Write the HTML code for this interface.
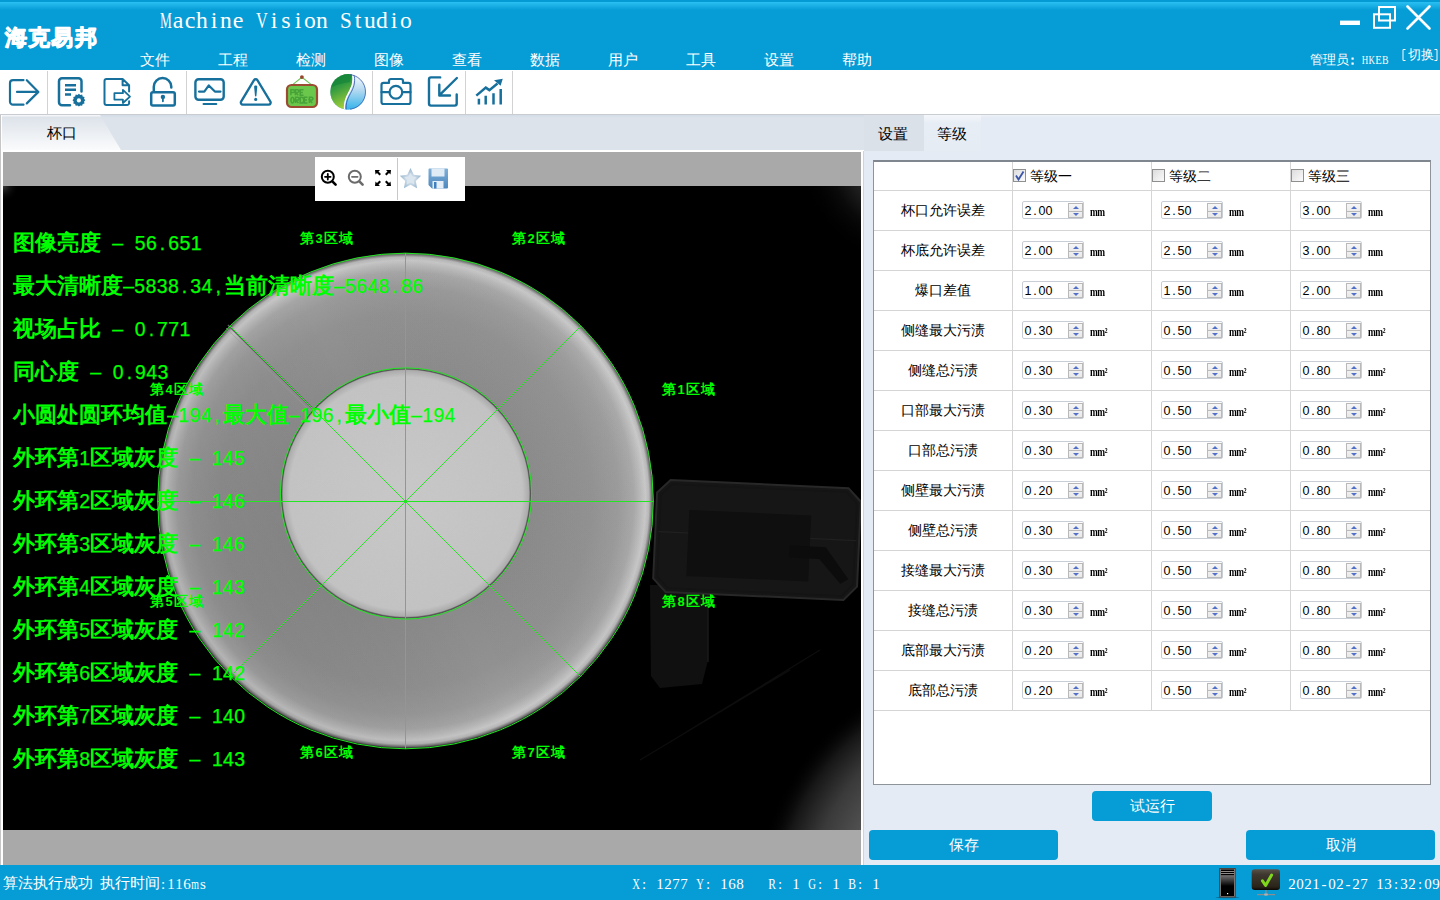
<!DOCTYPE html>
<html><head><meta charset="utf-8">
<style>
*{margin:0;padding:0;box-sizing:border-box}
html,body{width:1440px;height:900px;overflow:hidden;background:#e4ebf4;font-family:"Liberation Sans",sans-serif}
.a{position:absolute}
#title{left:0;top:0;width:1440px;height:70px;background:linear-gradient(#049bd4 0,#049bd4 2px,#2bc0f3 2px,#069dd6 10px,#069cd5 70px)}
#title .t{left:160px;top:9px;font-family:"Liberation Mono",monospace;font-size:24px;color:#fff;white-space:nowrap;transform-origin:0 0;transform:scaleX(0.833);letter-spacing:0}
#logo{left:4px;top:21px;font-size:23px;font-weight:900;color:#fff;white-space:nowrap;letter-spacing:0px;-webkit-text-stroke:0.7px #fff}
.menu{top:51px;font-size:15px;color:#fff;white-space:nowrap;font-weight:300}
#tool{left:0;top:70px;width:1440px;height:45px;background:#fff;border-bottom:1px solid #c9cdd2}
.sep{top:0;width:1px;height:44px;background:#d4d4d4}
#status{left:0;top:865px;width:1440px;height:35px;background:#069cd5;color:#fff}

#tabrow{left:0;top:115px;width:1440px;height:36px;background:linear-gradient(#d3dce8 0,#dce3ea 3px,#dce3ea 100%)}
#ltab{left:2px;top:115px;width:122px;height:35px;background:linear-gradient(#f3f5f8 0,#f3f5f8 1px,#dde3ea 2px,#fafbfc 100%);clip-path:polygon(0 0,98px 0,119px 35px,0 35px)}
#lpanel{left:0;top:150px;width:864px;height:715px;background:#fff;border-left:1px solid #c6c6c6}
#lbord{left:0;top:115px;width:2px;height:35px;background:linear-gradient(90deg,#c6c6c6 1px,#fff 1px)}
#imgwrap{left:3px;top:152px;width:858px;height:713px;background:#a9a9a9;overflow:hidden}
#rpanel{left:863px;top:151px;width:577px;height:714px;background:#e4ebf4;border-left:1px solid #d2d2d2}
#stab{left:864px;top:115px;width:60px;height:36px;background:#dae1e9}
#gtab{left:924px;top:115px;width:57px;height:36px;background:linear-gradient(#f4f7fb 0,#e7edf5 8px,#e6ecf4 100%)}
#grest{left:981px;top:115px;width:459px;height:36px;background:linear-gradient(#eef2f8 0,#e4ebf4 3px)}
.tabt{font-size:14.5px;color:#000;white-space:nowrap;font-weight:300}
#tbl{left:873px;top:160px;width:558px;height:625px;background:#fff;border:1px solid #8f949b;border-top:2px solid #80868e}
.hl{position:absolute;height:1px;background:#d5d5d5}
.vl{position:absolute;width:1px;background:#d5d5d5}
.lbl{position:absolute;font-size:14px;color:#000;white-space:nowrap;text-align:center;width:139px;font-weight:300}
.spin{position:absolute;width:62px;height:18px;border:1px solid #c9ced6;border-radius:2px;background:#fff}
.spin .v{position:absolute;left:1.5px;top:1px;font-family:"Liberation Sans",sans-serif;font-size:12.5px;line-height:16px;color:#000}
.spin .v i{font-style:normal;display:inline-block;width:7px;text-align:center}
.spin .b{position:absolute;left:45px;top:1px;width:15px;height:15px;border:1px solid #b9b9b9;background:linear-gradient(#f6f6f6 0,#ececec 50%,#b9b9b9 50%,#b9b9b9 calc(50% + 1px),#f0f0f0 calc(50% + 1px),#e8e8e8 100%)}
.spin .b::before{content:"";position:absolute;left:3.5px;top:2px;border-left:3.5px solid transparent;border-right:3.5px solid transparent;border-bottom:3.5px solid #5370c8}
.spin .b::after{content:"";position:absolute;left:3.5px;top:8.5px;border-left:3.5px solid transparent;border-right:3.5px solid transparent;border-top:3.5px solid #5370c8}
.unit{position:absolute;font-family:"Liberation Serif",serif;font-size:12px;font-weight:700;color:#000;letter-spacing:-0.6px;margin-top:2px;transform:scaleX(0.78);transform-origin:0 0}
.chk{position:absolute;width:13px;height:13px;border:1px solid #8e8f8f;background:linear-gradient(135deg,#dcdcdc,#fbfbfb)}
.btn{position:absolute;background:#069cd5;border-radius:4px;color:#fff;font-size:15px;text-align:center;line-height:30px;font-weight:300}
.st{position:absolute;top:874px;font-size:14px;color:#fff;white-space:nowrap;font-weight:300}

.gt{position:absolute;left:13px;font-size:22px;line-height:28px;color:#00ff00;white-space:nowrap;font-weight:700}
.gm{font-family:"Liberation Sans",sans-serif;font-size:19.5px;font-weight:400;-webkit-text-stroke:0.25px #00ff00}
.gm i{font-style:normal;display:inline-block;width:11.2px;text-align:center}
.gl{position:absolute;font-size:14px;line-height:18px;color:#00ff00;white-space:nowrap;font-weight:700;letter-spacing:0.6px}
.gd{font-family:"Liberation Sans",sans-serif;font-size:13px;font-weight:700;padding:0 1px}
.mono{font-family:"Liberation Mono",monospace}
</style></head><body>
<div id="title" class="a">
  <svg class="a" style="left:0;top:15px" width="110" height="40" viewBox="0 15 110 40"><text x="5" y="45" font-family="Liberation Sans, sans-serif" font-weight="700" font-size="22" fill="#fff" stroke="#fff" stroke-width="1.1" stroke-linejoin="round" stroke-linecap="round" letter-spacing="1.2">海克易邦</text></svg>
  <svg class="a" style="left:150px;top:0" width="280" height="40" viewBox="150 0 280 40"><g font-family="Liberation Serif, serif" font-size="24" fill="#fff" text-anchor="middle"><text x="166" y="28" transform="translate(166 0) scale(0.553 1) translate(-166 0)">M</text><text x="178" y="28">a</text><text x="190" y="28">c</text><text x="202" y="28" transform="translate(202 0) scale(0.983 1) translate(-202 0)">h</text><text x="214" y="28">i</text><text x="226" y="28" transform="translate(226 0) scale(0.983 1) translate(-226 0)">n</text><text x="238" y="28">e</text><text x="262" y="28" transform="translate(262 0) scale(0.681 1) translate(-262 0)">V</text><text x="274" y="28">i</text><text x="286" y="28">s</text><text x="298" y="28">i</text><text x="310" y="28" transform="translate(310 0) scale(0.983 1) translate(-310 0)">o</text><text x="322" y="28" transform="translate(322 0) scale(0.983 1) translate(-322 0)">n</text><text x="346" y="28" transform="translate(346 0) scale(0.884 1) translate(-346 0)">S</text><text x="358" y="28">t</text><text x="370" y="28" transform="translate(370 0) scale(0.983 1) translate(-370 0)">u</text><text x="382" y="28" transform="translate(382 0) scale(0.983 1) translate(-382 0)">d</text><text x="394" y="28">i</text><text x="406" y="28" transform="translate(406 0) scale(0.983 1) translate(-406 0)">o</text></g></svg>
  <div class="a menu" style="left:140px">文件</div>
  <div class="a menu" style="left:218px">工程</div>
  <div class="a menu" style="left:296px">检测</div>
  <div class="a menu" style="left:374px">图像</div>
  <div class="a menu" style="left:452px">查看</div>
  <div class="a menu" style="left:530px">数据</div>
  <div class="a menu" style="left:608px">用户</div>
  <div class="a menu" style="left:686px">工具</div>
  <div class="a menu" style="left:764px">设置</div>
  <div class="a menu" style="left:842px">帮助</div>
</div>
<svg class="a" style="left:1330px;top:0" width="110" height="40" viewBox="1330 0 110 40">
<rect x="1340" y="20.6" width="20" height="4.4" fill="#fff"/>
<g fill="none" stroke="#fff" stroke-width="2"><rect x="1379" y="7" width="16" height="13.5"/><rect x="1374" y="14.3" width="16" height="13.5"/></g>
<rect x="1375" y="15.3" width="14" height="0" fill="none"/>
<path d="M1407.5 6.5L1429.5 28.5M1429.5 6.5L1407.5 28.5" stroke="#fff" stroke-width="2.6" stroke-linecap="round"/>
</svg>
<div class="a" style="left:1310px;top:51px;font-size:13px;color:#fff;white-space:nowrap;font-weight:300">管理员</div>
<div class="a" style="left:1408px;top:45.5px;font-size:13px;color:#fff;white-space:nowrap;font-weight:300">切换</div>
<svg class="a" style="left:1340px;top:40px" width="100" height="30" viewBox="1340 40 100 30">
<rect x="1351.5" y="57.5" width="2.2" height="2.2" fill="#fff"/><rect x="1351.5" y="62.5" width="2.2" height="2.2" fill="#fff"/>
<g font-family="Liberation Serif, serif" font-size="12" fill="#fff" text-anchor="middle"><text x="1364.9" y="64" transform="translate(1364.9 0) scale(0.750 1) translate(-1364.9 0)">H</text><text x="1371.7" y="64" transform="translate(1371.7 0) scale(0.750 1) translate(-1371.7 0)">K</text><text x="1378.5" y="64" transform="translate(1378.5 0) scale(0.887 1) translate(-1378.5 0)">E</text><text x="1385.3" y="64" transform="translate(1385.3 0) scale(0.812 1) translate(-1385.3 0)">B</text></g>
<path d="M1405.5 49.5H1403V60.5H1405.5M1434.5 49.5H1437V60.5H1434.5" fill="none" stroke="#fff" stroke-width="1"/>
</svg>

<div id="tool" class="a"></div>
<svg class="a" style="left:0;top:70px" width="520" height="44" viewBox="0 70 520 44">
<g fill="#d2d2d2"><rect x="47" y="71" width="1" height="43"/><rect x="186" y="71" width="1" height="43"/><rect x="372" y="71" width="1" height="43"/><rect x="465" y="71" width="1" height="43"/><rect x="512" y="71" width="1" height="43"/></g>
<g fill="none" stroke="#17709c" stroke-width="2.2" stroke-linecap="round" stroke-linejoin="round">
<path d="M23.5 80.1H13a3 3 0 0 0-3 3V101.7a3 3 0 0 0 3 3H23.5"/>
<path d="M17 91.9H38.2M26.8 80.2L38.4 91.9L26.8 103.4"/>
<path d="M70 105.3H62a3 3 0 0 1-3-3V81.3a3 3 0 0 1 3-3H78.5a3 3 0 0 1 3 3V91.5" stroke-width="2.5"/>
<path d="M65 85.3H76M65 89.8H76M65 94.5H71" stroke-width="2.4" stroke-linecap="butt"/>
<path d="M122.6 79H106.5a2 2 0 0 0-2 2V103a2 2 0 0 0 2 2H127.1a2 2 0 0 0 2-2V101.2M129.1 91.4V85.3L122.6 79V85.3H129.1" stroke-width="2"/>
<path d="M114.4 93.2H122.9V89.9L130 96.6L122.9 103V99.6H114.4Z" stroke-width="1.8"/>
<path d="M153.8 91V86.75a8.75 8.75 0 0 1 17.5 0V87.6" stroke-width="2.5"/>
<rect x="151.2" y="92.2" width="23.6" height="13.4" rx="1.8" stroke-width="2.5"/>
<path d="M162.9 97.5V101.3" stroke-width="1.8"/>
<rect x="195.4" y="79.2" width="28.3" height="20.6" rx="3.2" stroke-width="2.4"/>
<path d="M199 91.6H204.3L208.8 85.4L214.9 91.6H220.5" stroke-width="2.2"/>
<path d="M203.5 103.9H216.3" stroke-width="2"/>
<path d="M254 80.2a2 2 0 0 1 3.4 0L270.4 101.6a2 2 0 0 1-1.7 3H242.8a2 2 0 0 1-1.7-3Z" stroke-width="2.3"/>
<path d="M389 82.9V81a2 2 0 0 1 2-2H401a2 2 0 0 1 2 2V82.9H408.5a2 2 0 0 1 2 2V102a2 2 0 0 1-2 2H383.5a2 2 0 0 1-2-2V84.9a2 2 0 0 1 2-2Z" stroke-width="2.2"/>
<circle cx="395.9" cy="92.2" r="6.4" stroke-width="2.2"/>
<path d="M381.5 92.2H389.4M402.4 92.2H410.5" stroke-width="2.2"/>
<path d="M440.2 77.4H431a2 2 0 0 0-2 2V103.6a2 2 0 0 0 2 2H454.7a2 2 0 0 0 2-2V94.4" stroke-width="2.4"/>
<path d="M456.9 78L439.5 95.2M439.3 84.8V95.5H450" stroke-width="2.4"/>
<path d="M478.9 98.8V104.6M485.7 95.7V104.6M493.5 93.2V104.6M500.7 89V104.6" stroke-width="2.5" stroke-linecap="butt"/>
<path d="M476.3 95.6L485.8 87.6L489.4 90.1L497.5 83.5" stroke-width="2.5" stroke-linecap="butt" stroke-linejoin="miter"/>
</g>
<g fill="#17709c">
<path d="M494 80.3L502.8 78.8L500.6 85.8Z"/>
<path d="M255.7 85.6c0.9 0 1.6 0.4 1.6 1.2L256.4 96c0 0.3-0.3 0.4-0.7 0.4s-0.7-0.1-0.7-0.4L254.1 86.8c0-0.8 0.7-1.2 1.6-1.2Z"/>
<circle cx="255.7" cy="99.4" r="1.55"/>
<circle cx="162.9" cy="96.9" r="2.2"/>
<path d="M78.9 93.8l1.4 1.2 1.8-.4.6 1.8 1.8.6-.4 1.8 1.2 1.4-1.2 1.4.4 1.8-1.8.6-.6 1.8-1.8-.4-1.4 1.2-1.4-1.2-1.8.4-.6-1.8-1.8-.6.4-1.8-1.2-1.4 1.2-1.4-.4-1.8 1.8-.6.6-1.8 1.8.4Z"/>
</g>
<circle cx="78.9" cy="100.4" r="2.1" fill="#fff"/>
<path d="M292.6 84.6L301.9 77.3L311.4 84.6" fill="none" stroke="#6cc552" stroke-width="1.1"/>
<circle cx="301.9" cy="77.1" r="1.9" fill="#97462c"/>
<rect x="287" y="85" width="30" height="22" rx="4.5" fill="#6bc64c" stroke="#9b4b31" stroke-width="2.2"/>
<g fill="none" stroke="#47a237" stroke-width="1.5">
<path d="M290.9 95.3V89.7H293.2a1.4 1.4 0 0 1 0 2.8H290.9M295.4 95.3V89.7H297.5a1.4 1.4 0 0 1 0 2.8H295.5L298.3 95.3M303.5 89.7H300.2V95.3H303.5M300.2 92.5H302.8"/>
<path d="M292.4 97.3a1.5 2.9 0 1 0 0.01 0ZM295.5 103V97.3H297.6a1.4 1.4 0 0 1 0 2.8H295.6L298.4 103M300.2 103V97.3H301.5a2.3 2.8 0 0 1 0 5.7ZM307.4 97.3H304.4V103H307.4M304.4 100.1H307M309.4 103V97.3H311.5a1.4 1.4 0 0 1 0 2.8H309.5L312.3 103"/>
</g>
<defs>
<linearGradient id="lg1" x1="0" y1="0" x2="0.3" y2="1"><stop offset="0" stop-color="#12843a"/><stop offset="0.45" stop-color="#339b40"/><stop offset="1" stop-color="#a2ce38"/></linearGradient>
<linearGradient id="lg2" x1="0" y1="0" x2="0" y2="1"><stop offset="0" stop-color="#ffffff"/><stop offset="0.45" stop-color="#b4d9f0"/><stop offset="1" stop-color="#2bb1ea"/></linearGradient>
<clipPath id="sph"><circle cx="348.1" cy="91.9" r="17.8"/></clipPath>
</defs>
<g clip-path="url(#sph)">
<rect x="330" y="73" width="37" height="38" fill="url(#lg2)"/>
<path d="M351.8 73C353.5 79 352.5 85 349.5 90.5C346.5 96 343 102 344.3 111H329V73Z" fill="url(#lg1)"/>
<path d="M352.3 73C354 79 353 85 350 90.5C347 96 343.5 102 344.8 111" fill="none" stroke="#fff" stroke-width="1.4"/>
<path d="M353.8 74C355.5 80 354.5 86 351.5 91.5C348.5 97 345 103 346.3 111" fill="none" stroke="#2a4fa8" stroke-width="0.8"/>
<path d="M330 88C338 84 345 83 350 82L352 73H330Z" fill="#0f7f36" opacity="0.55"/>
</g>
<circle cx="348.1" cy="91.9" r="17.4" fill="none" stroke="#3a5fb0" stroke-width="0.8" clip-path="url(#sphr)"/>
<clipPath id="sphr"><rect x="350" y="72" width="20" height="40"/></clipPath>
</svg>


<div id="tabrow" class="a"></div>
<div id="lbord" class="a"></div>
<div id="ltab" class="a"></div>
<div class="a tabt" style="left:47px;top:124px">杯口</div>
<div id="lpanel" class="a"></div>
<div id="imgwrap" class="a"></div>
<svg class="a" style="left:3px;top:186px" width="858" height="644" viewBox="3 186 858 644">
<defs>
<radialGradient id="ring" gradientUnits="userSpaceOnUse" cx="405.5" cy="500.5" r="248">
<stop offset="0" stop-color="#888"/>
<stop offset="0.5" stop-color="#8a8a8a"/>
<stop offset="0.75" stop-color="#909090"/>
<stop offset="0.86" stop-color="#999"/>
<stop offset="0.92" stop-color="#a6a6a6"/>
<stop offset="0.95" stop-color="#bababa"/>
<stop offset="0.968" stop-color="#c8c8c8"/>
<stop offset="0.982" stop-color="#b6b6b6"/>
<stop offset="0.993" stop-color="#6a6a6a"/>
<stop offset="1" stop-color="#1a1a1a"/>
</radialGradient>
<linearGradient id="shade" gradientUnits="userSpaceOnUse" x1="160" y1="620" x2="650" y2="380">
<stop offset="0" stop-color="#000" stop-opacity="0.12"/>
<stop offset="0.5" stop-color="#000" stop-opacity="0"/>
<stop offset="1" stop-color="#fff" stop-opacity="0.07"/>
</linearGradient>
<radialGradient id="inner" gradientUnits="userSpaceOnUse" cx="406" cy="493.3" r="125">
<stop offset="0" stop-color="#c8c8c8"/>
<stop offset="0.93" stop-color="#c3c3c3"/>
<stop offset="0.982" stop-color="#acacac"/>
<stop offset="1" stop-color="#707070"/>
</radialGradient>
<radialGradient id="br" gradientUnits="userSpaceOnUse" cx="1000" cy="905" r="300">
<stop offset="0" stop-color="#8a8a8a"/>
<stop offset="0.5" stop-color="#565656"/>
<stop offset="0.64" stop-color="#3a3a3a"/>
<stop offset="0.74" stop-color="#161616"/>
<stop offset="0.82" stop-color="#000" stop-opacity="0"/>
</radialGradient>
<radialGradient id="tr" gradientUnits="userSpaceOnUse" cx="905" cy="160" r="105">
<stop offset="0" stop-color="#4a4a4a"/>
<stop offset="0.45" stop-color="#262626"/>
<stop offset="0.7" stop-color="#0a0a0a"/>
<stop offset="1" stop-color="#000" stop-opacity="0"/>
</radialGradient>
<radialGradient id="tl" gradientUnits="userSpaceOnUse" cx="3" cy="186" r="16">
<stop offset="0" stop-color="#3c3c3c"/>
<stop offset="1" stop-color="#000" stop-opacity="0"/>
</radialGradient>
<filter id="noise" x="0" y="0" width="100%" height="100%"><feTurbulence type="fractalNoise" baseFrequency="0.9" numOctaves="1" seed="3"/><feColorMatrix values="0 0 0 0 0.5  0 0 0 0 0.5  0 0 0 0 0.5  0 0 0 0.12 0"/><feComposite in2="SourceGraphic" operator="in"/></filter>
</defs>
<rect x="3" y="186" width="858" height="644" fill="#000"/>
<rect x="3" y="186" width="858" height="644" fill="url(#br)"/>
<rect x="700" y="186" width="161" height="150" fill="url(#tr)"/>
<rect x="3" y="186" width="30" height="30" fill="url(#tl)"/>
<!-- sign -->
<path d="M650 585H708V660L702 684L660 688L651 676Z" fill="#101010"/>
<path d="M708 590V662" stroke="#1a1a1a" stroke-width="1.5"/>
<g transform="rotate(2.6 756 541)">
<path d="M668 484H846L859 497V582L846 596H668L655 583V497Z" fill="#161616" stroke="#282828" stroke-width="2"/>
<path d="M670 488H844L855 499V580L844 592H670L659 581V499Z" fill="none" stroke="#141414" stroke-width="1.5"/>
<path d="M658 536H856" stroke="#202020" stroke-width="1.3"/>
<rect x="688" y="513" width="122" height="66" fill="#0f0f0f"/>
<path d="M790 544H826L850 575L842 580L820 556H790Z" fill="#0c0c0c"/>
</g>
<path d="M640 760L790 670M670 742L820 650" stroke="#0d0d0d" stroke-width="1.2"/>
<!-- cup -->
<circle cx="405.5" cy="500.5" r="248" fill="url(#ring)"/>
<circle cx="405.5" cy="500.5" r="248" fill="url(#shade)"/>
<path d="M228 325L312 408" stroke="#5d5d5d" stroke-width="1.6"/>
<path d="M226 328L310 411" stroke="#9a9a9a" stroke-width="1" opacity="0.6"/>
<circle cx="406" cy="493.3" r="125" fill="url(#inner)"/>
<circle cx="406" cy="493.3" r="124.5" fill="none" stroke="#555" stroke-width="1.3"/>
<circle cx="405.5" cy="500.5" r="247" fill="#888" filter="url(#noise)" opacity="0.5"/>
<!-- overlays -->
<g fill="none" stroke="#22e622" stroke-width="1">
<circle cx="405.5" cy="501" r="247.8"/>
<circle cx="406" cy="493.5" r="125.6"/>
<path d="M405.5 253V749M157.5 501.5H653.5M230.1 326.1L580.9 676.9M580.9 326.1L230.1 676.9"/>
</g>
</svg>
<div class="a" style="left:315px;top:157px;width:150px;height:44px;background:#fff"></div>
<svg class="a" style="left:315px;top:157px" width="150" height="44" viewBox="315 157 150 44">
<rect x="397" y="158" width="1" height="42" fill="#c8c8c8"/>
<g fill="none" stroke-linecap="round">
<g stroke="#000"><circle cx="327.8" cy="176.8" r="6" stroke-width="2"/><path d="M325 176.8H330.6M327.8 174V179.6" stroke-width="1.8"/><path d="M332.6 181.6L335.6 184.6" stroke-width="2.6"/></g>
<g stroke="#6b6b6b"><circle cx="354.8" cy="176.8" r="6" stroke-width="2"/><path d="M352 176.8H357.6" stroke-width="1.8"/><path d="M359.6 181.6L362.6 184.6" stroke-width="2.6"/></g>
</g>
<g fill="#000">
<path d="M375 170H380L378.5 171.5L381 174L379.5 175.5L377 173L375.5 174.5Z"/>
<path d="M391 170H386L387.5 171.5L385 174L386.5 175.5L389 173L390.5 174.5Z"/>
<path d="M375 186H380L378.5 184.5L381 182L379.5 180.5L377 183L375.5 181.5Z"/>
<path d="M391 186H386L387.5 184.5L385 182L386.5 180.5L389 183L390.5 181.5Z"/>
</g>
<defs><radialGradient id="stg" cx="0.5" cy="0.55" r="0.55"><stop offset="0" stop-color="#e2ebf3"/><stop offset="0.5" stop-color="#c2d3e2"/><stop offset="1" stop-color="#94b3cd"/></radialGradient>
<linearGradient id="flg" x1="0" y1="0" x2="0" y2="1"><stop offset="0" stop-color="#7eafd8"/><stop offset="1" stop-color="#4d88be"/></linearGradient></defs>
<path d="M410.50 168.00L413.79 174.67L421.15 175.74L415.83 180.93L417.08 188.26L410.50 184.80L403.92 188.26L405.17 180.93L399.85 175.74L407.21 174.67Z" fill="url(#stg)"/>
<path d="M410.50 172.70L412.50 176.45L416.68 177.19L413.73 180.25L414.32 184.46L410.50 182.60L406.68 184.46L407.27 180.25L404.32 177.19L408.50 176.45Z" fill="#dbe6ef"/>
<path d="M429 168.5H447a1 1 0 0 1 1 1V187.5a1 1 0 0 1-1 1H432L428.5 185V169.5a1 1 0 0 1 .5-1Z" fill="url(#flg)"/>
<rect x="431.5" y="168.5" width="13" height="8" fill="#dfecf6"/>
<rect x="432.5" y="181" width="11" height="7.5" fill="#e3eef8"/>
<rect x="434" y="182" width="2.5" height="6.5" fill="#3f7fbf"/>
</svg>
<div class="gt" style="top:229px">图像亮度<span class="gm"><i>&#160;</i><i>&#8211;</i><i>&#160;</i><i>5</i><i>6</i><i>.</i><i>6</i><i>5</i><i>1</i></span></div>
<div class="gt" style="top:272px">最大清晰度<span class="gm"><i>&#8211;</i><i>5</i><i>8</i><i>3</i><i>8</i><i>.</i><i>3</i><i>4</i><i>,</i></span>当前清晰度<span class="gm"><i>&#8211;</i><i>5</i><i>6</i><i>4</i><i>8</i><i>.</i><i>8</i><i>6</i></span></div>
<div class="gt" style="top:315px">视场占比<span class="gm"><i>&#160;</i><i>&#8211;</i><i>&#160;</i><i>0</i><i>.</i><i>7</i><i>7</i><i>1</i></span></div>
<div class="gt" style="top:358px">同心度<span class="gm"><i>&#160;</i><i>&#8211;</i><i>&#160;</i><i>0</i><i>.</i><i>9</i><i>4</i><i>3</i></span></div>
<div class="gt" style="top:401px">小圆处圆环均值<span class="gm"><i>&#8211;</i><i>1</i><i>9</i><i>4</i><i>,</i></span>最大值<span class="gm"><i>&#8211;</i><i>1</i><i>9</i><i>6</i><i>,</i></span>最小值<span class="gm"><i>&#8211;</i><i>1</i><i>9</i><i>4</i></span></div>
<div class="gt" style="top:444px">外环第<span class="gm"><i>1</i></span>区域灰度<span class="gm"><i>&#160;</i><i>&#8211;</i><i>&#160;</i><i>1</i><i>4</i><i>5</i></span></div>
<div class="gt" style="top:487px">外环第<span class="gm"><i>2</i></span>区域灰度<span class="gm"><i>&#160;</i><i>&#8211;</i><i>&#160;</i><i>1</i><i>4</i><i>6</i></span></div>
<div class="gt" style="top:530px">外环第<span class="gm"><i>3</i></span>区域灰度<span class="gm"><i>&#160;</i><i>&#8211;</i><i>&#160;</i><i>1</i><i>4</i><i>6</i></span></div>
<div class="gt" style="top:573px">外环第<span class="gm"><i>4</i></span>区域灰度<span class="gm"><i>&#160;</i><i>&#8211;</i><i>&#160;</i><i>1</i><i>4</i><i>3</i></span></div>
<div class="gt" style="top:616px">外环第<span class="gm"><i>5</i></span>区域灰度<span class="gm"><i>&#160;</i><i>&#8211;</i><i>&#160;</i><i>1</i><i>4</i><i>2</i></span></div>
<div class="gt" style="top:659px">外环第<span class="gm"><i>6</i></span>区域灰度<span class="gm"><i>&#160;</i><i>&#8211;</i><i>&#160;</i><i>1</i><i>4</i><i>2</i></span></div>
<div class="gt" style="top:702px">外环第<span class="gm"><i>7</i></span>区域灰度<span class="gm"><i>&#160;</i><i>&#8211;</i><i>&#160;</i><i>1</i><i>4</i><i>0</i></span></div>
<div class="gt" style="top:745px">外环第<span class="gm"><i>8</i></span>区域灰度<span class="gm"><i>&#160;</i><i>&#8211;</i><i>&#160;</i><i>1</i><i>4</i><i>3</i></span></div>
<div class="gl" style="left:300px;top:229px">第<span class="gd">3</span>区域</div>
<div class="gl" style="left:512px;top:229px">第<span class="gd">2</span>区域</div>
<div class="gl" style="left:150px;top:379.5px">第<span class="gd">4</span>区域</div>
<div class="gl" style="left:662px;top:379.5px">第<span class="gd">1</span>区域</div>
<div class="gl" style="left:150px;top:591.5px">第<span class="gd">5</span>区域</div>
<div class="gl" style="left:662px;top:591.5px">第<span class="gd">8</span>区域</div>
<div class="gl" style="left:300px;top:742.5px">第<span class="gd">6</span>区域</div>
<div class="gl" style="left:512px;top:742.5px">第<span class="gd">7</span>区域</div>


<div id="stab" class="a"></div>
<div id="gtab" class="a"></div>
<div id="grest" class="a"></div>
<div class="a tabt" style="left:878px;top:125px">设置</div>
<div class="a tabt" style="left:937px;top:125px">等级</div>
<div id="rpanel" class="a"></div>
<div id="tbl" class="a"></div>
<div class="hl" style="left:874px;top:190px;width:556px"></div>
<div class="hl" style="left:874px;top:230px;width:556px"></div>
<div class="hl" style="left:874px;top:270px;width:556px"></div>
<div class="hl" style="left:874px;top:310px;width:556px"></div>
<div class="hl" style="left:874px;top:350px;width:556px"></div>
<div class="hl" style="left:874px;top:390px;width:556px"></div>
<div class="hl" style="left:874px;top:430px;width:556px"></div>
<div class="hl" style="left:874px;top:470px;width:556px"></div>
<div class="hl" style="left:874px;top:510px;width:556px"></div>
<div class="hl" style="left:874px;top:550px;width:556px"></div>
<div class="hl" style="left:874px;top:590px;width:556px"></div>
<div class="hl" style="left:874px;top:630px;width:556px"></div>
<div class="hl" style="left:874px;top:670px;width:556px"></div>
<div class="hl" style="left:874px;top:710px;width:556px"></div>
<div class="vl" style="left:1012px;top:162px;height:549px"></div>
<div class="vl" style="left:1151px;top:162px;height:549px"></div>
<div class="vl" style="left:1290px;top:162px;height:549px"></div>
<div class="chk" style="left:1013px;top:169px"></div>
<svg class="a" style="left:1013px;top:169px" width="13" height="13"><path d="M3 6.5L5.5 10.5L10.5 2.5" fill="none" stroke="#3a54a8" stroke-width="1.8"/></svg>
<div class="lbl" style="left:1030px;top:168px;width:auto;text-align:left">等级一</div>
<div class="chk" style="left:1152px;top:169px"></div>
<div class="lbl" style="left:1169px;top:168px;width:auto;text-align:left">等级二</div>
<div class="chk" style="left:1291px;top:169px"></div>
<div class="lbl" style="left:1308px;top:168px;width:auto;text-align:left">等级三</div>
<div class="lbl" style="left:873px;top:202px">杯口允许误差</div>
<div class="spin" style="left:1022px;top:201px"><span class="v"><i>2</i><i>.</i><i>0</i><i>0</i></span><span class="b"></span></div>
<div class="unit" style="left:1090px;top:203px">mm</div>
<div class="spin" style="left:1161px;top:201px"><span class="v"><i>2</i><i>.</i><i>5</i><i>0</i></span><span class="b"></span></div>
<div class="unit" style="left:1229px;top:203px">mm</div>
<div class="spin" style="left:1300px;top:201px"><span class="v"><i>3</i><i>.</i><i>0</i><i>0</i></span><span class="b"></span></div>
<div class="unit" style="left:1368px;top:203px">mm</div>
<div class="lbl" style="left:873px;top:242px">杯底允许误差</div>
<div class="spin" style="left:1022px;top:241px"><span class="v"><i>2</i><i>.</i><i>0</i><i>0</i></span><span class="b"></span></div>
<div class="unit" style="left:1090px;top:243px">mm</div>
<div class="spin" style="left:1161px;top:241px"><span class="v"><i>2</i><i>.</i><i>5</i><i>0</i></span><span class="b"></span></div>
<div class="unit" style="left:1229px;top:243px">mm</div>
<div class="spin" style="left:1300px;top:241px"><span class="v"><i>3</i><i>.</i><i>0</i><i>0</i></span><span class="b"></span></div>
<div class="unit" style="left:1368px;top:243px">mm</div>
<div class="lbl" style="left:873px;top:282px">爆口差值</div>
<div class="spin" style="left:1022px;top:281px"><span class="v"><i>1</i><i>.</i><i>0</i><i>0</i></span><span class="b"></span></div>
<div class="unit" style="left:1090px;top:283px">mm</div>
<div class="spin" style="left:1161px;top:281px"><span class="v"><i>1</i><i>.</i><i>5</i><i>0</i></span><span class="b"></span></div>
<div class="unit" style="left:1229px;top:283px">mm</div>
<div class="spin" style="left:1300px;top:281px"><span class="v"><i>2</i><i>.</i><i>0</i><i>0</i></span><span class="b"></span></div>
<div class="unit" style="left:1368px;top:283px">mm</div>
<div class="lbl" style="left:873px;top:322px">侧缝最大污渍</div>
<div class="spin" style="left:1022px;top:321px"><span class="v"><i>0</i><i>.</i><i>3</i><i>0</i></span><span class="b"></span></div>
<div class="unit" style="left:1090px;top:323px">mm&#178;</div>
<div class="spin" style="left:1161px;top:321px"><span class="v"><i>0</i><i>.</i><i>5</i><i>0</i></span><span class="b"></span></div>
<div class="unit" style="left:1229px;top:323px">mm&#178;</div>
<div class="spin" style="left:1300px;top:321px"><span class="v"><i>0</i><i>.</i><i>8</i><i>0</i></span><span class="b"></span></div>
<div class="unit" style="left:1368px;top:323px">mm&#178;</div>
<div class="lbl" style="left:873px;top:362px">侧缝总污渍</div>
<div class="spin" style="left:1022px;top:361px"><span class="v"><i>0</i><i>.</i><i>3</i><i>0</i></span><span class="b"></span></div>
<div class="unit" style="left:1090px;top:363px">mm&#178;</div>
<div class="spin" style="left:1161px;top:361px"><span class="v"><i>0</i><i>.</i><i>5</i><i>0</i></span><span class="b"></span></div>
<div class="unit" style="left:1229px;top:363px">mm&#178;</div>
<div class="spin" style="left:1300px;top:361px"><span class="v"><i>0</i><i>.</i><i>8</i><i>0</i></span><span class="b"></span></div>
<div class="unit" style="left:1368px;top:363px">mm&#178;</div>
<div class="lbl" style="left:873px;top:402px">口部最大污渍</div>
<div class="spin" style="left:1022px;top:401px"><span class="v"><i>0</i><i>.</i><i>3</i><i>0</i></span><span class="b"></span></div>
<div class="unit" style="left:1090px;top:403px">mm&#178;</div>
<div class="spin" style="left:1161px;top:401px"><span class="v"><i>0</i><i>.</i><i>5</i><i>0</i></span><span class="b"></span></div>
<div class="unit" style="left:1229px;top:403px">mm&#178;</div>
<div class="spin" style="left:1300px;top:401px"><span class="v"><i>0</i><i>.</i><i>8</i><i>0</i></span><span class="b"></span></div>
<div class="unit" style="left:1368px;top:403px">mm&#178;</div>
<div class="lbl" style="left:873px;top:442px">口部总污渍</div>
<div class="spin" style="left:1022px;top:441px"><span class="v"><i>0</i><i>.</i><i>3</i><i>0</i></span><span class="b"></span></div>
<div class="unit" style="left:1090px;top:443px">mm&#178;</div>
<div class="spin" style="left:1161px;top:441px"><span class="v"><i>0</i><i>.</i><i>5</i><i>0</i></span><span class="b"></span></div>
<div class="unit" style="left:1229px;top:443px">mm&#178;</div>
<div class="spin" style="left:1300px;top:441px"><span class="v"><i>0</i><i>.</i><i>8</i><i>0</i></span><span class="b"></span></div>
<div class="unit" style="left:1368px;top:443px">mm&#178;</div>
<div class="lbl" style="left:873px;top:482px">侧壁最大污渍</div>
<div class="spin" style="left:1022px;top:481px"><span class="v"><i>0</i><i>.</i><i>2</i><i>0</i></span><span class="b"></span></div>
<div class="unit" style="left:1090px;top:483px">mm&#178;</div>
<div class="spin" style="left:1161px;top:481px"><span class="v"><i>0</i><i>.</i><i>5</i><i>0</i></span><span class="b"></span></div>
<div class="unit" style="left:1229px;top:483px">mm&#178;</div>
<div class="spin" style="left:1300px;top:481px"><span class="v"><i>0</i><i>.</i><i>8</i><i>0</i></span><span class="b"></span></div>
<div class="unit" style="left:1368px;top:483px">mm&#178;</div>
<div class="lbl" style="left:873px;top:522px">侧壁总污渍</div>
<div class="spin" style="left:1022px;top:521px"><span class="v"><i>0</i><i>.</i><i>3</i><i>0</i></span><span class="b"></span></div>
<div class="unit" style="left:1090px;top:523px">mm&#178;</div>
<div class="spin" style="left:1161px;top:521px"><span class="v"><i>0</i><i>.</i><i>5</i><i>0</i></span><span class="b"></span></div>
<div class="unit" style="left:1229px;top:523px">mm&#178;</div>
<div class="spin" style="left:1300px;top:521px"><span class="v"><i>0</i><i>.</i><i>8</i><i>0</i></span><span class="b"></span></div>
<div class="unit" style="left:1368px;top:523px">mm&#178;</div>
<div class="lbl" style="left:873px;top:562px">接缝最大污渍</div>
<div class="spin" style="left:1022px;top:561px"><span class="v"><i>0</i><i>.</i><i>3</i><i>0</i></span><span class="b"></span></div>
<div class="unit" style="left:1090px;top:563px">mm&#178;</div>
<div class="spin" style="left:1161px;top:561px"><span class="v"><i>0</i><i>.</i><i>5</i><i>0</i></span><span class="b"></span></div>
<div class="unit" style="left:1229px;top:563px">mm&#178;</div>
<div class="spin" style="left:1300px;top:561px"><span class="v"><i>0</i><i>.</i><i>8</i><i>0</i></span><span class="b"></span></div>
<div class="unit" style="left:1368px;top:563px">mm&#178;</div>
<div class="lbl" style="left:873px;top:602px">接缝总污渍</div>
<div class="spin" style="left:1022px;top:601px"><span class="v"><i>0</i><i>.</i><i>3</i><i>0</i></span><span class="b"></span></div>
<div class="unit" style="left:1090px;top:603px">mm&#178;</div>
<div class="spin" style="left:1161px;top:601px"><span class="v"><i>0</i><i>.</i><i>5</i><i>0</i></span><span class="b"></span></div>
<div class="unit" style="left:1229px;top:603px">mm&#178;</div>
<div class="spin" style="left:1300px;top:601px"><span class="v"><i>0</i><i>.</i><i>8</i><i>0</i></span><span class="b"></span></div>
<div class="unit" style="left:1368px;top:603px">mm&#178;</div>
<div class="lbl" style="left:873px;top:642px">底部最大污渍</div>
<div class="spin" style="left:1022px;top:641px"><span class="v"><i>0</i><i>.</i><i>2</i><i>0</i></span><span class="b"></span></div>
<div class="unit" style="left:1090px;top:643px">mm&#178;</div>
<div class="spin" style="left:1161px;top:641px"><span class="v"><i>0</i><i>.</i><i>5</i><i>0</i></span><span class="b"></span></div>
<div class="unit" style="left:1229px;top:643px">mm&#178;</div>
<div class="spin" style="left:1300px;top:641px"><span class="v"><i>0</i><i>.</i><i>8</i><i>0</i></span><span class="b"></span></div>
<div class="unit" style="left:1368px;top:643px">mm&#178;</div>
<div class="lbl" style="left:873px;top:682px">底部总污渍</div>
<div class="spin" style="left:1022px;top:681px"><span class="v"><i>0</i><i>.</i><i>2</i><i>0</i></span><span class="b"></span></div>
<div class="unit" style="left:1090px;top:683px">mm&#178;</div>
<div class="spin" style="left:1161px;top:681px"><span class="v"><i>0</i><i>.</i><i>5</i><i>0</i></span><span class="b"></span></div>
<div class="unit" style="left:1229px;top:683px">mm&#178;</div>
<div class="spin" style="left:1300px;top:681px"><span class="v"><i>0</i><i>.</i><i>8</i><i>0</i></span><span class="b"></span></div>
<div class="unit" style="left:1368px;top:683px">mm&#178;</div>

<div class="btn" style="left:1092px;top:791px;width:120px;height:30px">试运行</div>
<div class="btn" style="left:869px;top:830px;width:189px;height:30px">保存</div>
<div class="btn" style="left:1246px;top:830px;width:189px;height:30px">取消</div>
<div id="status" class="a"></div>
<div class="st" style="left:3px;font-size:14.5px;top:874px">算法执行成功</div>
<div class="st" style="left:100px;font-size:14.5px;top:874px">执行时间</div>
<svg class="a" style="left:0;top:865px" width="1440" height="35" viewBox="0 865 1440 35"><g font-family="Liberation Serif, serif" font-size="15" fill="#fff" text-anchor="middle"><text x="163.0" y="889">:</text><text x="171.0" y="889">1</text><text x="179.0" y="889">1</text><text x="187.0" y="889">6</text><text x="195.0" y="889" transform="translate(195.0 0) scale(0.660 1) translate(-195.0 0)">m</text><text x="203.0" y="889">s</text></g><g font-family="Liberation Serif, serif" font-size="15" fill="#fff" text-anchor="middle"><text x="636.0" y="889" transform="translate(636.0 0) scale(0.711 1) translate(-636.0 0)">X</text><text x="644.0" y="889">:</text><text x="660.0" y="889">1</text><text x="668.0" y="889">2</text><text x="676.0" y="889">7</text><text x="684.0" y="889">7</text><text x="700.0" y="889" transform="translate(700.0 0) scale(0.711 1) translate(-700.0 0)">Y</text><text x="708.0" y="889">:</text><text x="724.0" y="889">1</text><text x="732.0" y="889">6</text><text x="740.0" y="889">8</text><text x="772.0" y="889" transform="translate(772.0 0) scale(0.770 1) translate(-772.0 0)">R</text><text x="780.0" y="889">:</text><text x="796.0" y="889">1</text><text x="812.0" y="889" transform="translate(812.0 0) scale(0.711 1) translate(-812.0 0)">G</text><text x="820.0" y="889">:</text><text x="836.0" y="889">1</text><text x="852.0" y="889" transform="translate(852.0 0) scale(0.770 1) translate(-852.0 0)">B</text><text x="860.0" y="889">:</text><text x="876.0" y="889">1</text></g><g font-family="Liberation Serif, serif" font-size="15" fill="#fff" text-anchor="middle"><text x="1292.0" y="889">2</text><text x="1300.0" y="889">0</text><text x="1308.0" y="889">2</text><text x="1316.0" y="889">1</text><text x="1324.0" y="889">-</text><text x="1332.0" y="889">0</text><text x="1340.0" y="889">2</text><text x="1348.0" y="889">-</text><text x="1356.0" y="889">2</text><text x="1364.0" y="889">7</text><text x="1380.0" y="889">1</text><text x="1388.0" y="889">3</text><text x="1396.0" y="889">:</text><text x="1404.0" y="889">3</text><text x="1412.0" y="889">2</text><text x="1420.0" y="889">:</text><text x="1428.0" y="889">0</text><text x="1436.0" y="889">9</text></g></svg>
<svg class="a" style="left:1210px;top:865px" width="80" height="35" viewBox="1210 865 80 35">
<defs><linearGradient id="srv" x1="0" y1="0" x2="0" y2="1"><stop offset="0" stop-color="#6a6a6a"/><stop offset="0.5" stop-color="#000"/><stop offset="1" stop-color="#000"/></linearGradient>
<linearGradient id="mon" x1="0" y1="0" x2="0" y2="1"><stop offset="0" stop-color="#5a5248"/><stop offset="0.25" stop-color="#3e3830"/><stop offset="0.85" stop-color="#2a2418"/><stop offset="1" stop-color="#0a0805"/></linearGradient></defs>
<ellipse cx="1227.5" cy="897.5" rx="12" ry="0.8" fill="#0a4a66" opacity="0.6"/>
<rect x="1219.2" y="868" width="16.6" height="29.5" fill="#4b403b"/>
<rect x="1220.2" y="869" width="14.6" height="27.5" fill="#8a817c"/>
<rect x="1221" y="869.5" width="13" height="26.5" fill="#000"/>
<rect x="1221" y="876" width="13" height="20" fill="url(#srv)"/>
<rect x="1221" y="871" width="13" height="0.9" fill="#a09a96"/>
<rect x="1221" y="873" width="13" height="0.9" fill="#a09a96"/>
<rect x="1221" y="875.2" width="13" height="0.8" fill="#777"/>
<rect x="1227" y="893" width="1.2" height="1.2" fill="#fff"/>
<rect x="1251.7" y="869.2" width="28.3" height="20.8" rx="3" fill="url(#mon)"/>
<path d="M1262.5 880.8L1265.6 885.5L1271.6 875" fill="none" stroke="#7fd61c" stroke-width="3" stroke-linecap="round" stroke-linejoin="round"/>
<path d="M1266 890V893.5M1257 894.7H1275" stroke="#8d8d8d" stroke-width="1.2"/>
<ellipse cx="1266" cy="894.5" rx="2" ry="1.3" fill="#b0b0b0"/>
</svg>


</body></html>
